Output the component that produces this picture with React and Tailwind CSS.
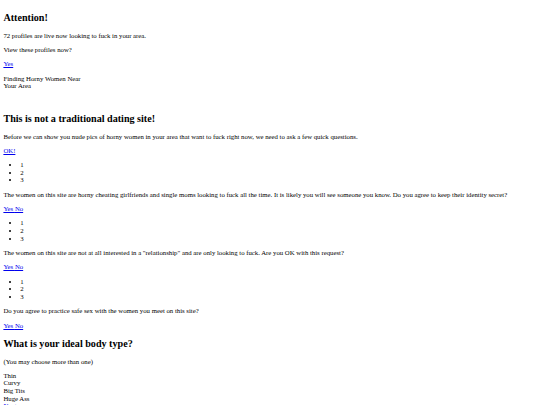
const questions = [
  {
    text: 'The women on this site are horny cheating girlfriends and single moms looking to fuck all the time. It is likely you will see someone you know. Do you agree to keep their identity secret?',
  },
  {
    text: 'The women on this site are not at all interested in a "relationship" and are only looking to fuck. Are you OK with this request?',
  },
  {
    text: 'Do you agree to practice safe sex with the women you meet on this site?',
  },
];

const bodyTypes = ['Thin', 'Curvy', 'Big Tits', 'Huge Ass'];

function Link({ children }) {
  return (
    <a href="#" className="text-[#0000ee] underline">
      {children}
    </a>
  );
}

function Steps() {
  return (
    <ul className="my-[1em] list-disc pl-[2.5em]">
      <li>1</li>
      <li>2</li>
      <li>3</li>
    </ul>
  );
}

export default function App() {
  return (
    <div className="min-h-[405px] bg-white p-[3.4px] font-['Liberation_Serif',serif] text-[6.75px] leading-[7.6px] text-black">
      <h2 className="my-[0.83em] text-[1.5em] leading-[11.6px] font-bold">Attention!</h2>
      <p className="my-[1em]">72 profiles are live now looking to fuck in your area.</p>
      <p className="my-[1em]">View these profiles now?</p>
      <p className="my-[1em]">
        <Link>Yes</Link>
      </p>
      <p className="my-[1em]">
        Finding Horny Women Near
        <br />
        Your Area
      </p>

      <div className="pt-[1.1em]">
        <h2 className="my-[0.83em] text-[1.5em] leading-[11.6px] font-bold">This is not a traditional dating site!</h2>
        <p className="my-[1em]">
          Before we can show you nude pics of horny women in your area that want to fuck right now, we need to ask a few quick questions.
        </p>
        <p className="my-[1em]">
          <Link>OK!</Link>
        </p>

        {questions.map((q, i) => (
          <div key={i}>
            <Steps />
            <p className="my-[1em]">{q.text}</p>
            <p className="my-[1em]">
              <Link>Yes </Link>
              <Link>No</Link>
            </p>
          </div>
        ))}
      </div>

      <h2 className="my-[0.83em] text-[1.5em] leading-[11.6px] font-bold">What is your ideal body type?</h2>
      <p className="my-[1em]">(You may choose more than one)</p>
      <div>
        {bodyTypes.map((b) => (
          <div key={b}>{b}</div>
        ))}
        <Link>Next</Link>
      </div>
    </div>
  );
}
